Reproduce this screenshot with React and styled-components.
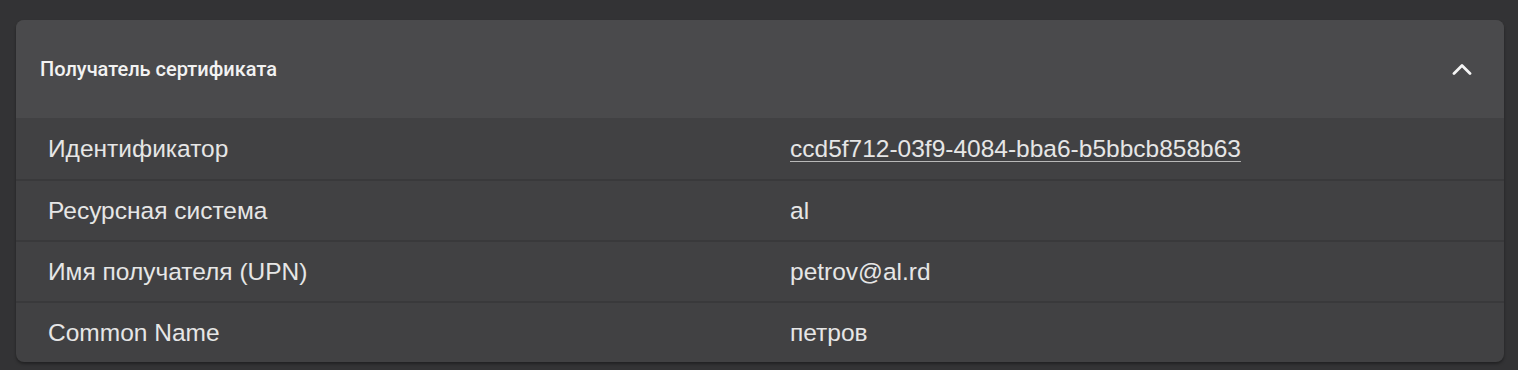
import React from "react"
import styled, { createGlobalStyle } from "styled-components"

const GlobalStyle = createGlobalStyle`
    html, body {
        margin: 0;
        padding: 0;
        background: #333335;
    }
`

const Page = styled.div`
    padding: 20px 14px 8px 16px;
    font-family: "Liberation Sans", Arial, sans-serif;
`

const Card = styled.section`
    background: #414143;
    border-radius: 8px;
    overflow: hidden;
    box-shadow: 0 2px 3px rgba(0, 0, 0, 0.35);
`

const Header = styled.div`
    display: flex;
    align-items: center;
    justify-content: space-between;
    height: 98px;
    padding: 0 32px 0 24px;
    background: #4a4a4c;
`

const Title = styled.h2`
    margin: 0;
    font-family: Roboto, "Liberation Sans", sans-serif;
    font-weight: 500;
    font-size: 20px;
    color: #f2f2f2;
`

const Toggle = styled.button`
    display: flex;
    align-items: center;
    justify-content: center;
    padding: 0;
    border: 0;
    background: transparent;
    color: #f5f5f5;
    cursor: pointer;
`

const Row = styled.div`
    display: grid;
    grid-template-columns: 50% 50%;
    align-items: center;
    height: 61px;
    border-top: ${p => (p.$first ? "0" : "2px solid #39393b")};
    box-sizing: border-box;
`

const Cell = styled.div`
    padding: 0 30px 0 ${p => (p.$value ? 30 : 32)}px;
    font-size: 24.5px;
    color: #e6e6e6;
    white-space: nowrap;
`

const Link = styled.a`
    color: #e6e6e6;
    text-decoration: underline;
    text-decoration-color: #b8b8b8;
    text-underline-offset: 4px;
    text-decoration-thickness: 1px;
`

const rows = [
    { label: "Идентификатор", value: "ccd5f712-03f9-4084-bba6-b5bbcb858b63", link: true },
    { label: "Ресурсная система", value: "al" },
    { label: "Имя получателя (UPN)", value: "petrov@al.rd" },
    { label: "Common Name", value: "петров" },
]

function ChevronUp() {
    return (
        <svg width="20" height="12" viewBox="0 0 20 12" fill="none">
            <polyline points="2,10.5 10,2.5 18,10.5" stroke="currentColor" strokeWidth="2.8" strokeLinecap="round" strokeLinejoin="round" />
        </svg>
    )
}

export default function App() {
    return (
        <>
            <GlobalStyle />
            <Page>
                <Card>
                    <Header>
                        <Title>Получатель сертификата</Title>
                        <Toggle aria-label="Свернуть"><ChevronUp /></Toggle>
                    </Header>
                    {rows.map((r, i) => (
                        <Row key={r.label} $first={i === 0}>
                            <Cell>{r.label}</Cell>
                            <Cell $value>{r.link ? <Link href="#">{r.value}</Link> : r.value}</Cell>
                        </Row>
                    ))}
                </Card>
            </Page>
        </>
    )
}
